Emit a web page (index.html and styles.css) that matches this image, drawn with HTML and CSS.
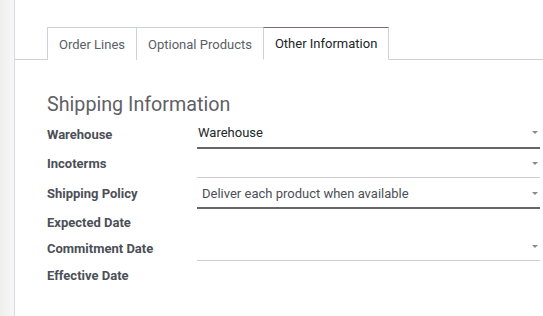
FILE: index.html
```html
<!DOCTYPE html>
<html lang="en">
<head>
    <meta charset="UTF-8">
    <meta name="viewport" content="width=device-width, initial-scale=1.0">
    <title>Sales Order - Other Information</title>
    <link rel="stylesheet" href="styles.css">
</head>
<body>
    <div class="side"></div>
    <div class="sheet">
        <ul class="tabs">
            <li class="tab">Order Lines</li>
            <li class="tab">Optional Products</li>
            <li class="tab active">Other Information</li>
        </ul>

        <div class="group">
            <h2>Shipping Information</h2>

            <div class="row row-warehouse">
                <div class="label">Warehouse</div>
                <div class="field field-strong">
                    <span>Warehouse</span>
                    <span class="caret"></span>
                </div>
            </div>

            <div class="row row-incoterms">
                <div class="label">Incoterms</div>
                <div class="field">
                    <span></span>
                    <span class="caret"></span>
                </div>
            </div>

            <div class="row row-policy">
                <div class="label">Shipping Policy</div>
                <div class="field field-strong field-select">
                    <span>Deliver each product when available</span>
                    <span class="caret"></span>
                </div>
            </div>

            <div class="row row-expected">
                <div class="label">Expected Date</div>
            </div>

            <div class="row row-commitment">
                <div class="label">Commitment Date</div>
                <div class="field">
                    <span></span>
                    <span class="caret"></span>
                </div>
            </div>

            <div class="row row-effective">
                <div class="label">Effective Date</div>
            </div>
        </div>
    </div>
</body>
</html>
```

FILE: styles.css
```css
* {
    margin: 0;
    padding: 0;
    box-sizing: border-box;
}

body {
    display: flex;
    min-height: 316px;
    background: #ffffff;
    font-family: Roboto, 'Liberation Sans', sans-serif;
    font-size: 13px;
    color: #212529;
}

.side {
    width: 15px;
    flex-shrink: 0;
    background: linear-gradient(to right, #efefef, #f7f7f7);
    border-right: 1px solid #d6dade;
}

.sheet {
    flex: 1;
    padding-top: 27px;
}

.tabs {
    list-style: none;
    display: flex;
    padding-left: 32px;
    border-bottom: 1px solid #cfd2d6;
}

.tab {
    height: 33px;
    margin-bottom: -1px;
    margin-left: -1px;
    padding: 0 11px;
    display: flex;
    align-items: center;
    border: 1px solid #cfd2d6;
    border-bottom: none;
    color: #5b5e66;
    background: #ffffff;
}

.tab:first-child {
    margin-left: 0;
}

.tab.active {
    border-top-color: #7c6a7c;
    border-bottom: 1px solid #ffffff;
    color: #212529;
}

.group {
    padding: 33px 3px 0 32px;
}

h2 {
    font-size: 19.7px;
    font-weight: 400;
    line-height: 24px;
    color: #5f6066;
    margin-bottom: 2px;
}

.row {
    display: flex;
    align-items: center;
}

.label {
    width: 150px;
    flex-shrink: 0;
    font-weight: 700;
    color: #4c4f57;
}

.field {
    flex: 1;
    align-self: stretch;
    display: flex;
    align-items: center;
    padding-left: 1px;
    border-bottom: 1px solid #cfcfcf;
    color: #212529;
}

.field-strong {
    border-bottom: 2px solid #666666;
}

.field-select {
    padding-left: 5px;
    color: #4c4f57;
}

.caret {
    margin-left: auto;
    margin-right: 2px;
    width: 0;
    height: 0;
    border-left: 3px solid transparent;
    border-right: 3px solid transparent;
    border-top: 3px solid #8a8a8a;
}

.row-warehouse { height: 30px; }
.row-incoterms { height: 29px; }
.row-policy { height: 31px; }
.row-expected { height: 26px; }
.row-commitment { height: 26px; }
.row-effective { height: 28px; }

.row-warehouse .field { padding-bottom: 1px; }
.row-policy .field { padding-top: 1px; }
.row-commitment .field { padding-bottom: 2px; }
```
